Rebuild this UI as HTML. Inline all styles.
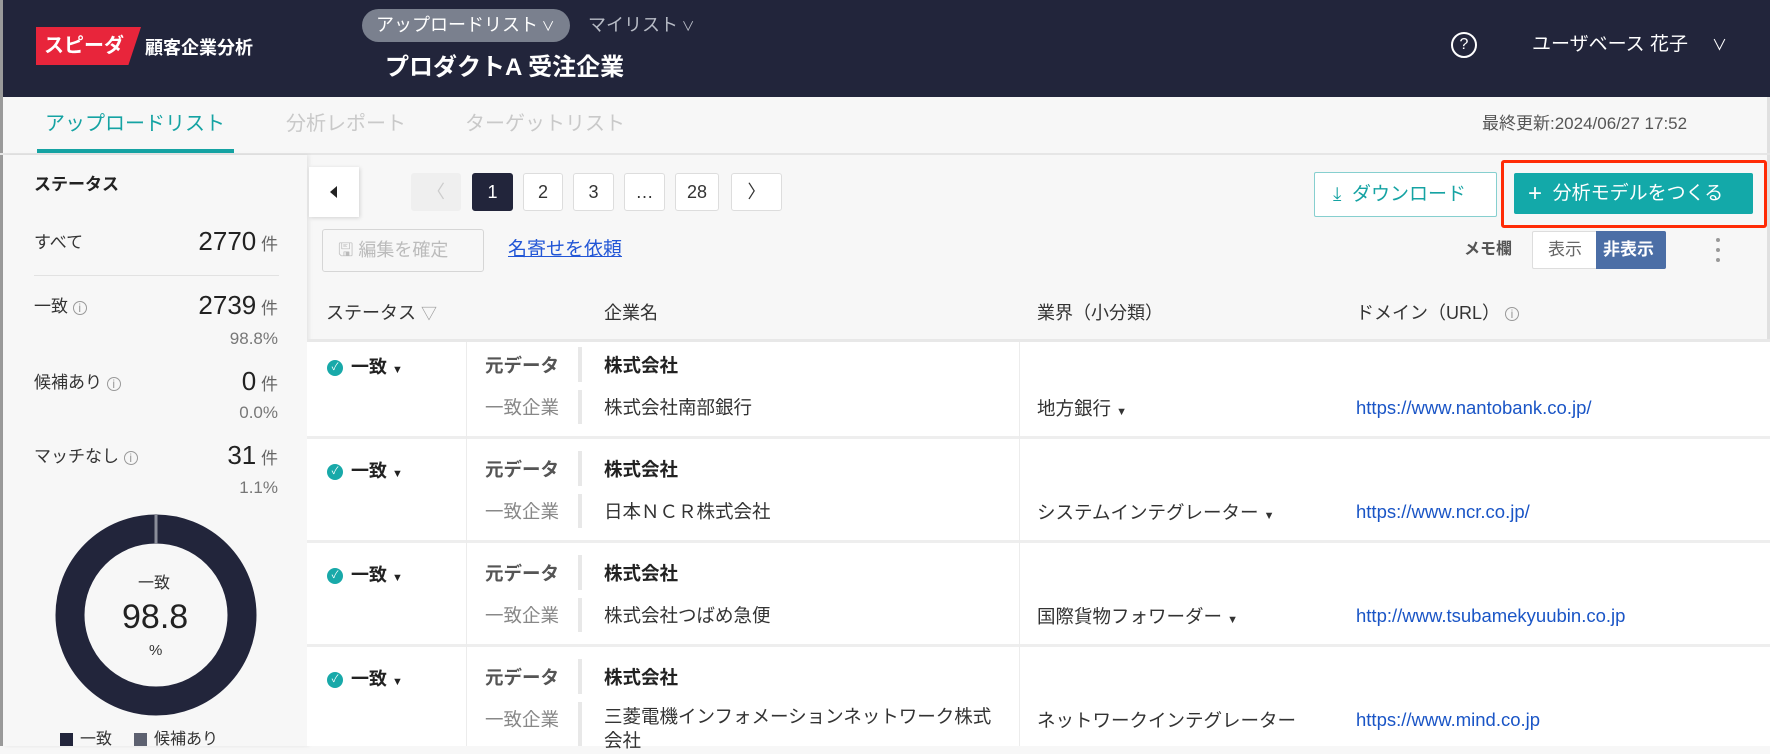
<!DOCTYPE html>
<html><head><meta charset="utf-8">
<style>
*{margin:0;padding:0;box-sizing:border-box}
body{width:1770px;height:746px;overflow:hidden;background:#f7f7f7;font-family:"Liberation Sans","Noto Sans CJK JP",sans-serif;color:#333;position:relative}
.a{position:absolute;white-space:nowrap}
.t{height:28px;line-height:28px}
.hdr{left:0;top:0;width:1770px;height:97px;background:#22253b}
.pg{position:absolute;top:173px;height:38px;border:1px solid #ddd;background:#fff;border-radius:3px;text-align:center;line-height:36px;font-size:18px;color:#333}
.row{position:absolute;left:307px;width:1463px;height:104px;background:#fff}
.sep{position:absolute;left:307px;width:1463px;height:3px;background:#eeeeee}
.r{font-size:18.5px}
</style></head><body>
<div class="a hdr"></div>
<div class="a" style="left:0;top:0;width:3px;height:746px;background:#9a9a9a"></div>
<div class="a" style="left:1767px;top:97px;width:3px;height:649px;background:#e0e0e0"></div>
<!-- logo -->
<div class="a" style="left:36px;top:27px;width:105px;height:38px;background:#e8253b;clip-path:polygon(0 0,100% 0,88% 100%,0 100%)"></div>
<div class="a t" style="left:44px;top:32px;color:#fff;font-weight:bold;font-size:20px">スピーダ</div>
<div class="a t" style="left:145px;top:34px;color:#fff;font-weight:bold;font-size:18px">顧客企業分析</div>
<div class="a" style="left:362px;top:9px;width:208px;height:33px;background:#7a808e;border-radius:17px"></div>
<div class="a t" style="left:376px;top:11px;color:#fff;font-size:18px">アップロードリスト<span style="font-size:13px"> ∨</span></div>
<div class="a t" style="left:588px;top:11px;color:#b8bcc6;font-size:18px">マイリスト<span style="font-size:13px"> ∨</span></div>
<div class="a t" style="left:385px;top:54px;color:#fff;font-weight:bold;font-size:24px">プロダクトA 受注企業</div>
<div class="a" style="left:1451px;top:32px;width:26px;height:26px;border:2px solid #fff;border-radius:50%;color:#fff;text-align:center;line-height:22px;font-size:16px">?</div>
<div class="a t" style="left:1532px;top:31px;color:#fff;font-size:19px">ユーザベース 花子</div>
<div class="a t" style="left:1712px;top:32px;color:#fff;font-size:15px">∨</div>
<!-- tabs -->
<div class="a t" style="left:45px;top:110px;color:#15a3a3;font-size:20px">アップロードリスト</div>
<div class="a" style="left:37px;top:149px;width:197px;height:4px;background:#15a3a3"></div>
<div class="a t" style="left:286px;top:110px;color:#c9c9c9;font-size:20px">分析レポート</div>
<div class="a t" style="left:465px;top:110px;color:#c9c9c9;font-size:20px">ターゲットリスト</div>
<div class="a t" style="left:1482px;top:110px;color:#555;font-size:17px">最終更新:2024/06/27 17:52</div>
<div class="a" style="left:0;top:153px;width:1770px;height:2px;background:#e6e6e6"></div>
<!-- sidebar -->
<div class="a" style="left:3px;top:155px;width:304px;height:591px;background:#f7f7f7;box-shadow:2px 0 4px rgba(0,0,0,.08)"></div>
<div class="a t" style="left:34px;top:171px;font-weight:bold;font-size:17px;color:#222">ステータス</div>
<div class="a t" style="left:34px;top:229px;font-size:17px">すべて</div>
<div class="a" style="right:1492px;top:226px;font-size:26px;color:#222">2770<span style="font-size:17px;color:#666"> 件</span></div>
<div class="a" style="left:34px;top:275px;width:245px;height:1px;background:#e2e2e2"></div>
<div class="a t" style="left:34px;top:293px;font-size:17px">一致 <span style="font-size:12px;color:#999;border:1px solid #999;border-radius:50%;display:inline-block;width:14px;height:14px;line-height:12px;text-align:center;vertical-align:middle">i</span></div>
<div class="a" style="right:1492px;top:290px;font-size:26px;color:#222">2739<span style="font-size:17px;color:#666"> 件</span></div>
<div class="a t" style="right:1492px;top:325px;font-size:17px;color:#777">98.8%</div>
<div class="a t" style="left:34px;top:369px;font-size:17px">候補あり <span style="font-size:12px;color:#999;border:1px solid #999;border-radius:50%;display:inline-block;width:14px;height:14px;line-height:12px;text-align:center;vertical-align:middle">i</span></div>
<div class="a" style="right:1492px;top:366px;font-size:26px;color:#222">0<span style="font-size:17px;color:#666"> 件</span></div>
<div class="a t" style="right:1492px;top:399px;font-size:17px;color:#777">0.0%</div>
<div class="a t" style="left:34px;top:443px;font-size:17px">マッチなし <span style="font-size:12px;color:#999;border:1px solid #999;border-radius:50%;display:inline-block;width:14px;height:14px;line-height:12px;text-align:center;vertical-align:middle">i</span></div>
<div class="a" style="right:1492px;top:440px;font-size:26px;color:#222">31<span style="font-size:17px;color:#666"> 件</span></div>
<div class="a t" style="right:1492px;top:474px;font-size:17px;color:#777">1.1%</div>
<svg class="a" style="left:55px;top:514px" width="202" height="202" viewBox="0 0 202 202">
<circle cx="101" cy="101" r="86" fill="none" stroke="#22253b" stroke-width="29"/>
<line x1="101" y1="1" x2="101" y2="30" stroke="#8a8d99" stroke-width="3"/>
</svg>
<div class="a t" style="left:138px;top:570px;font-size:16px;color:#333">一致</div>
<div class="a" style="left:122px;top:598px;font-size:34px;color:#222">98.8</div>
<div class="a t" style="left:149px;top:637px;font-size:15px;color:#333">%</div>
<div class="a" style="left:60px;top:733px;width:13px;height:13px;background:#22253b"></div>
<div class="a t" style="left:80px;top:726px;font-size:16px">一致</div>
<div class="a" style="left:134px;top:733px;width:13px;height:13px;background:#5d6170"></div>
<div class="a t" style="left:154px;top:726px;font-size:16px">候補あり</div>
<!-- toolbar -->
<div class="a" style="left:309px;top:167px;width:50px;height:50px;background:#fff;box-shadow:1px 1px 4px rgba(0,0,0,.15)"></div>
<div class="a" style="left:330px;top:186px;width:0;height:0;border-top:6px solid transparent;border-bottom:6px solid transparent;border-right:7px solid #222"></div>
<div class="pg" style="left:411px;width:50px;background:#efefef;border-color:#efefef;color:#ccc">〈</div>
<div class="pg" style="left:472px;width:41px;background:#22253b;border-color:#22253b;color:#fff">1</div>
<div class="pg" style="left:523px;width:40px">2</div>
<div class="pg" style="left:573px;width:41px">3</div>
<div class="pg" style="left:624px;width:41px">…</div>
<div class="pg" style="left:675px;width:44px">28</div>
<div class="pg" style="left:731px;width:51px">〉</div>
<div class="a" style="left:1314px;top:172px;width:183px;height:45px;border:1px solid #86cfcf;background:#fff;border-radius:2px"></div>
<div class="a t" style="left:1333px;top:181px;color:#15a3a3;font-size:19px">⤓&nbsp; ダウンロード</div>
<div class="a" style="left:1501px;top:160px;width:266px;height:68px;border:3px solid #ff2b06;border-radius:3px"></div>
<div class="a" style="left:1514px;top:173px;width:239px;height:41px;background:#13a9a9;border-radius:2px"></div>
<div class="a t" style="left:1528px;top:180px;color:#fff;font-size:19px"><span style="font-size:24px;vertical-align:-2px">+</span>&nbsp; 分析モデルをつくる</div>
<div class="a" style="left:322px;top:229px;width:162px;height:43px;border:1px solid #d6d6d6;border-radius:3px"></div>
<div class="a t" style="left:338px;top:236px;color:#bbb;font-size:18px">🖫 編集を確定</div>
<div class="a t" style="left:508px;top:236px;color:#2256d6;font-size:19px;text-decoration:underline">名寄せを依頼</div>
<div class="a t" style="left:1464px;top:236px;color:#555;font-weight:bold;font-size:16px">メモ欄</div>
<div class="a" style="left:1532px;top:231px;width:134px;height:38px;border:1px solid #ddd;background:#fff;border-radius:2px"></div>
<div class="a t" style="left:1548px;top:236px;color:#666;font-size:17px">表示</div>
<div class="a" style="left:1596px;top:231px;width:70px;height:38px;background:#4b6ea6;border-radius:0 2px 2px 0"></div>
<div class="a t" style="left:1603px;top:236px;color:#fff;font-weight:bold;font-size:17px">非表示</div>
<div class="a" style="left:1716px;top:238px;width:4px;height:4px;background:#999;border-radius:50%;box-shadow:0 10px 0 #999,0 20px 0 #999"></div>
<!-- table header -->
<div class="a t" style="left:326px;top:299px;font-size:18px">ステータス <span style="color:#999;font-size:16px">▽</span></div>
<div class="a t" style="left:604px;top:299px;font-size:18px">企業名</div>
<div class="a t" style="left:1037px;top:299px;font-size:18px">業界（小分類）</div>
<div class="a t" style="left:1356px;top:299px;font-size:18px">ドメイン（URL） <span style="font-size:12px;color:#999;border:1px solid #999;border-radius:50%;display:inline-block;width:14px;height:14px;line-height:12px;text-align:center;vertical-align:middle">i</span></div>
<div class="a" style="left:307px;top:339px;width:1463px;height:3px;background:#e8e8e8"></div>
<!-- rows -->
<div class="row" style="top:342px;height:95px"></div>
<div class="sep" style="top:436px"></div>
<div class="row" style="top:439px;height:102px"></div>
<div class="sep" style="top:540px"></div>
<div class="row" style="top:543px;height:102px"></div>
<div class="sep" style="top:644px"></div>
<div class="row" style="top:647px;height:99px"></div>
<div class="a" style="left:466px;top:342px;width:1px;height:404px;background:#ececec"></div>
<div class="a" style="left:1019px;top:342px;width:1px;height:404px;background:#ececec"></div>

<!-- row1 -->
<div class="a" style="left:327px;top:360px;width:16px;height:16px;border-radius:50%;background:#18a9a9;color:#fff;font-size:10px;text-align:center;line-height:16px">✓</div>
<div class="a t" style="left:351px;top:353px;font-weight:bold;font-size:18px;color:#222">一致 <span style="font-size:11px">▼</span></div>
<div class="a t r" style="left:485px;top:352px;font-weight:bold;color:#555">元データ</div>
<div class="a t r" style="left:485px;top:394px;color:#888">一致企業</div>
<div class="a" style="left:578px;top:347px;width:4px;height:35px;background:#e8e8e8"></div>
<div class="a" style="left:578px;top:390px;width:4px;height:34px;background:#e8e8e8"></div>
<div class="a t r" style="left:604px;top:352px;font-weight:bold;color:#222">株式会社</div>
<div class="a t r" style="left:604px;top:394px">株式会社南部銀行</div>
<div class="a t r" style="left:1037px;top:395px">地方銀行 <span style="font-size:11px">▼</span></div>
<div class="a t r" style="left:1356px;top:394px;color:#1a55c6">https://www.nantobank.co.jp/</div>
<!-- row2 -->
<div class="a" style="left:327px;top:464px;width:16px;height:16px;border-radius:50%;background:#18a9a9;color:#fff;font-size:10px;text-align:center;line-height:16px">✓</div>
<div class="a t" style="left:351px;top:457px;font-weight:bold;font-size:18px;color:#222">一致 <span style="font-size:11px">▼</span></div>
<div class="a t r" style="left:485px;top:456px;font-weight:bold;color:#555">元データ</div>
<div class="a t r" style="left:485px;top:498px;color:#888">一致企業</div>
<div class="a" style="left:578px;top:451px;width:4px;height:35px;background:#e8e8e8"></div>
<div class="a" style="left:578px;top:494px;width:4px;height:34px;background:#e8e8e8"></div>
<div class="a t r" style="left:604px;top:456px;font-weight:bold;color:#222">株式会社</div>
<div class="a t r" style="left:604px;top:498px">日本ＮＣＲ株式会社</div>
<div class="a t r" style="left:1037px;top:499px">システムインテグレーター <span style="font-size:11px">▼</span></div>
<div class="a t r" style="left:1356px;top:498px;color:#1a55c6">https://www.ncr.co.jp/</div>
<!-- row3 -->
<div class="a" style="left:327px;top:568px;width:16px;height:16px;border-radius:50%;background:#18a9a9;color:#fff;font-size:10px;text-align:center;line-height:16px">✓</div>
<div class="a t" style="left:351px;top:561px;font-weight:bold;font-size:18px;color:#222">一致 <span style="font-size:11px">▼</span></div>
<div class="a t r" style="left:485px;top:560px;font-weight:bold;color:#555">元データ</div>
<div class="a t r" style="left:485px;top:602px;color:#888">一致企業</div>
<div class="a" style="left:578px;top:555px;width:4px;height:35px;background:#e8e8e8"></div>
<div class="a" style="left:578px;top:598px;width:4px;height:34px;background:#e8e8e8"></div>
<div class="a t r" style="left:604px;top:560px;font-weight:bold;color:#222">株式会社</div>
<div class="a t r" style="left:604px;top:602px">株式会社つばめ急便</div>
<div class="a t r" style="left:1037px;top:603px">国際貨物フォワーダー <span style="font-size:11px">▼</span></div>
<div class="a t r" style="left:1356px;top:602px;color:#1a55c6">http://www.tsubamekyuubin.co.jp</div>
<!-- row4 -->
<div class="a" style="left:327px;top:672px;width:16px;height:16px;border-radius:50%;background:#18a9a9;color:#fff;font-size:10px;text-align:center;line-height:16px">✓</div>
<div class="a t" style="left:351px;top:665px;font-weight:bold;font-size:18px;color:#222">一致 <span style="font-size:11px">▼</span></div>
<div class="a t r" style="left:485px;top:664px;font-weight:bold;color:#555">元データ</div>
<div class="a t r" style="left:485px;top:706px;color:#888">一致企業</div>
<div class="a" style="left:578px;top:659px;width:4px;height:35px;background:#e8e8e8"></div>
<div class="a" style="left:578px;top:702px;width:4px;height:44px;background:#e8e8e8"></div>
<div class="a t r" style="left:604px;top:664px;font-weight:bold;color:#222">株式会社</div>
<div class="a r" style="left:604px;top:705px;line-height:24px">三菱電機インフォメーションネットワーク株式<br>会社</div>
<div class="a t r" style="left:1037px;top:707px">ネットワークインテグレーター</div>
<div class="a t r" style="left:1356px;top:706px;color:#1a55c6">https://www.mind.co.jp</div>
</body></html>
